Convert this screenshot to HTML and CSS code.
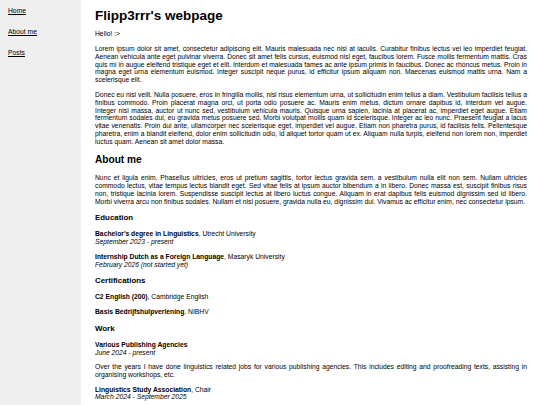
FILE: index.html
```html
<!DOCTYPE html>
<html lang="en">
<head>
<meta charset="utf-8">
<title>Flipp3rrr's webpage</title>
<link rel="stylesheet" href="styles.css">
</head>
<body>
<div class="layout">
  <nav class="sidebar">
    <a href="#">Home</a>
    <a href="#">About me</a>
    <a href="#">Posts</a>
  </nav>
  <main class="content">
    <h1>Flipp3rrr's webpage</h1>
    <p>Hello! :&gt;</p>
    <p class="just">Lorem ipsum dolor sit amet, consectetur adipiscing elit. Mauris malesuada nec nisi at iaculis. Curabitur finibus lectus vel leo imperdiet feugiat. Aenean vehicula ante eget pulvinar viverra. Donec sit amet felis cursus, euismod nisl eget, faucibus lorem. Fusce mollis fermentum mattis. Cras quis mi in augue eleifend tristique eget et elit. Interdum et malesuada fames ac ante ipsum primis in faucibus. Donec ac rhoncus metus. Proin in magna eget urna elementum euismod. Integer suscipit neque purus, id efficitur ipsum aliquam non. Maecenas euismod mattis urna. Nam a scelerisque elit.</p>
    <p class="just">Donec eu nisi velit. Nulla posuere, eros in fringilla mollis, nisl risus elementum urna, ut sollicitudin enim tellus a diam. Vestibulum facilisis tellus a finibus commodo. Proin placerat magna orci, ut porta odio posuere ac. Mauris enim metus, dictum ornare dapibus id, interdum vel augue. Integer nisl massa, auctor ut nunc sed, vestibulum vehicula mauris. Quisque urna sapien, lacinia at placerat ac, imperdiet eget augue. Etiam fermentum sodales dui, eu gravida metus posuere sed. Morbi volutpat mollis quam id scelerisque. Integer ac leo nunc. Praesent feugiat a lacus vitae venenatis. Proin dui ante, ullamcorper nec scelerisque eget, imperdiet vel augue. Etiam non pharetra purus, id facilisis felis. Pellentesque pharetra, enim a blandit eleifend, dolor enim sollicitudin odio, id aliquet tortor quam ut ex. Aliquam nulla turpis, eleifend non lorem non, imperdiet luctus quam. Aenean sit amet dolor massa.</p>
    <h2>About me</h2>
    <p class="just">Nunc et ligula enim. Phasellus ultricies, eros ut pretium sagittis, tortor lectus gravida sem, a vestibulum nulla elit non sem. Nullam ultricies commodo lectus, vitae tempus lectus blandit eget. Sed vitae felis at ipsum auctor bibendum a in libero. Donec massa est, suscipit finibus risus non, tristique lacinia lorem. Suspendisse suscipit lectus at libero luctus congue. Aliquam in erat dapibus felis euismod dignissim sed id libero. Morbi viverra arcu non finibus sodales. Nullam et nisi posuere, gravida nulla eu, dignissim dui. Vivamus ac efficitur enim, nec consectetur ipsum.</p>
    <h3>Education</h3>
    <p><b>Bachelor's degree in Linguistics</b>, Utrecht University<br><i>September 2023 - present</i></p>
    <p><b>Internship Dutch as a Foreign Language</b>, Masaryk University<br><i>February 2026 (not started yet)</i></p>
    <h3>Certifications</h3>
    <p><b>C2 English (200)</b>, Cambridge English</p>
    <p><b>Basis Bedrijfshulpverlening</b>, NIBHV</p>
    <h3>Work</h3>
    <p><b>Various Publishing Agencies</b><br><i>June 2024 - present</i></p>
    <p class="just">Over the years I have done linguistics related jobs for various publishing agencies. This includes editing and proofreading texts, assisting in organising workshops, etc.</p>
    <p><b>Linguistics Study Association</b>, Chair<br><i>March 2024 - September 2025</i></p>
  </main>
</div>
</body>
</html>
```
FILE: styles.css
```css
html, body {
  margin: 0;
  padding: 0;
  background: #ffffff;
}
body {
  font-family: "Liberation Sans", Arial, sans-serif;
  font-size: 6.75px;
  line-height: 1.16;
  color: #000;
}
.layout {
  display: flex;
  min-height: 405px;
}
.sidebar {
  width: 81px;
  flex-shrink: 0;
  background: #efefef;
  display: flex;
  flex-direction: column;
  align-items: flex-start;
  gap: 13.2px;
  padding: 6.5px 8px;
  box-sizing: border-box;
}
.sidebar a {
  color: #000;
  text-decoration: underline;
}
.content {
  flex: 1;
  padding: 0 13px 0 14px;
  min-width: 0;
}
.content h1 {
  font-size: 13.5px;
  margin: 8px 0 6.75px;
}
.content h2 {
  font-size: 10.125px;
  margin: 0.83em 0;
}
.content h3 {
  font-size: 7.9px;
  margin: 1em 0;
}
.content p {
  margin: 1em 0;
}
.just {
  text-align: justify;
}
```
